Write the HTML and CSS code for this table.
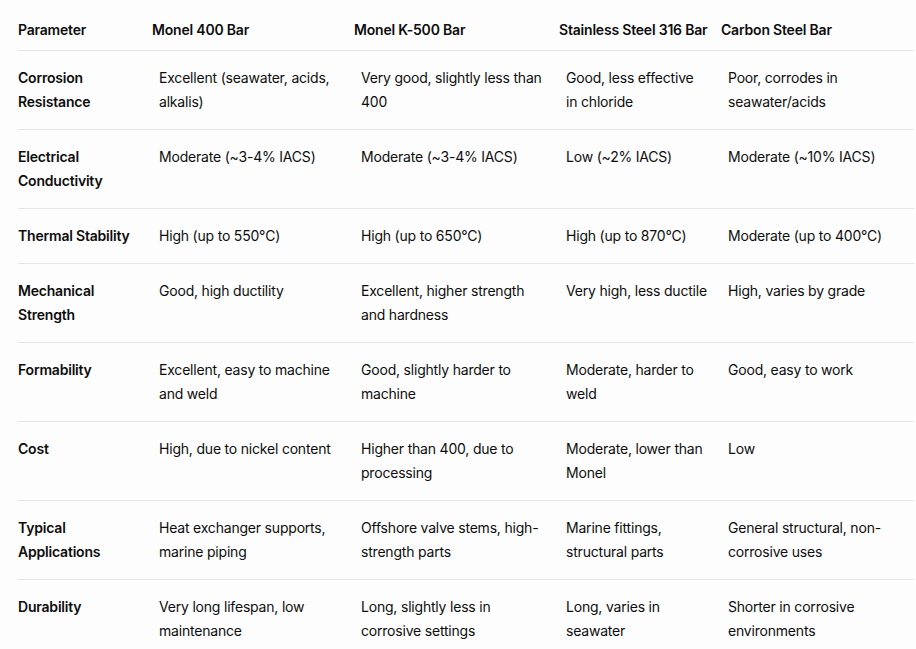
FILE: index.html
```html
<!DOCTYPE html>
<html lang="en">
<head>
<meta charset="utf-8">
<title>Comparison</title>
<link rel="stylesheet" href="styles.css">
</head>
<body>
<table class="cmp">
  <colgroup>
    <col class="c1"><col class="c2"><col class="c3"><col class="c4"><col class="c5">
  </colgroup>
  <thead>
    <tr>
      <th>Parameter</th>
      <th>Monel 400 Bar</th>
      <th>Monel K-500 Bar</th>
      <th>Stainless Steel 316 Bar</th>
      <th>Carbon Steel Bar</th>
    </tr>
  </thead>
  <tbody>
    <tr>
      <td>Corrosion Resistance</td>
      <td>Excellent (seawater, acids, alkalis)</td>
      <td>Very good, slightly less than 400</td>
      <td>Good, less effective in chloride</td>
      <td>Poor, corrodes in seawater/acids</td>
    </tr>
    <tr>
      <td>Electrical Conductivity</td>
      <td>Moderate (~3-4% IACS)</td>
      <td>Moderate (~3-4% IACS)</td>
      <td>Low (~2% IACS)</td>
      <td>Moderate (~10% IACS)</td>
    </tr>
    <tr>
      <td>Thermal Stability</td>
      <td>High (up to 550°C)</td>
      <td>High (up to 650°C)</td>
      <td>High (up to 870°C)</td>
      <td>Moderate (up to 400°C)</td>
    </tr>
    <tr>
      <td>Mechanical Strength</td>
      <td>Good, high ductility</td>
      <td>Excellent, higher strength and hardness</td>
      <td>Very high, less ductile</td>
      <td>High, varies by grade</td>
    </tr>
    <tr>
      <td>Formability</td>
      <td>Excellent, easy to machine and weld</td>
      <td>Good, slightly harder to machine</td>
      <td>Moderate, harder to weld</td>
      <td>Good, easy to work</td>
    </tr>
    <tr>
      <td>Cost</td>
      <td>High, due to nickel content</td>
      <td>Higher than 400, due to processing</td>
      <td>Moderate, lower than Monel</td>
      <td>Low</td>
    </tr>
    <tr>
      <td>Typical Applications</td>
      <td>Heat exchanger supports, marine piping</td>
      <td>Offshore valve stems, high-strength parts</td>
      <td>Marine fittings, structural parts</td>
      <td>General structural, non-corrosive uses</td>
    </tr>
    <tr>
      <td>Durability</td>
      <td>Very long lifespan, low maintenance</td>
      <td>Long, slightly less in corrosive settings</td>
      <td>Long, varies in seawater</td>
      <td>Shorter in corrosive environments</td>
    </tr>
  </tbody>
</table>
</body>
</html>
```

FILE: styles.css
```css
html, body {
  margin: 0;
  padding: 0;
  background: #fdfdfd;
}
body {
  padding: 10px 2px 0 18px;
  font-family: Inter, "Noto Sans", sans-serif;
  font-size: 14px;
  line-height: 24px;
  letter-spacing: -0.2px;
  color: #0d0d0d;
}
.cmp {
  width: 896px;
  table-layout: fixed;
  border-collapse: collapse;
}
.c1 { width: 134px; }
.c2 { width: 202px; }
.c3 { width: 205px; }
.c4 { width: 162px; }
.c5 { width: 193px; }
.cmp th {
  text-align: left;
  font-weight: 600;
  padding: 8px 6px 8px 0;
  white-space: nowrap;
  vertical-align: bottom;
}
.cmp thead tr {
  border-bottom: 1px solid #e5e5e5;
}
.cmp tbody tr {
  border-bottom: 1px solid #e5e5e5;
}
.cmp tbody tr:last-child {
  border-bottom: none;
}
.cmp td {
  vertical-align: top;
  padding: 15px 7px 15px 7px;
}
.cmp td:first-child {
  padding-left: 0;
  font-weight: 600;
}
.cmp td:nth-child(4) {
  padding-right: 13px;
}
```
